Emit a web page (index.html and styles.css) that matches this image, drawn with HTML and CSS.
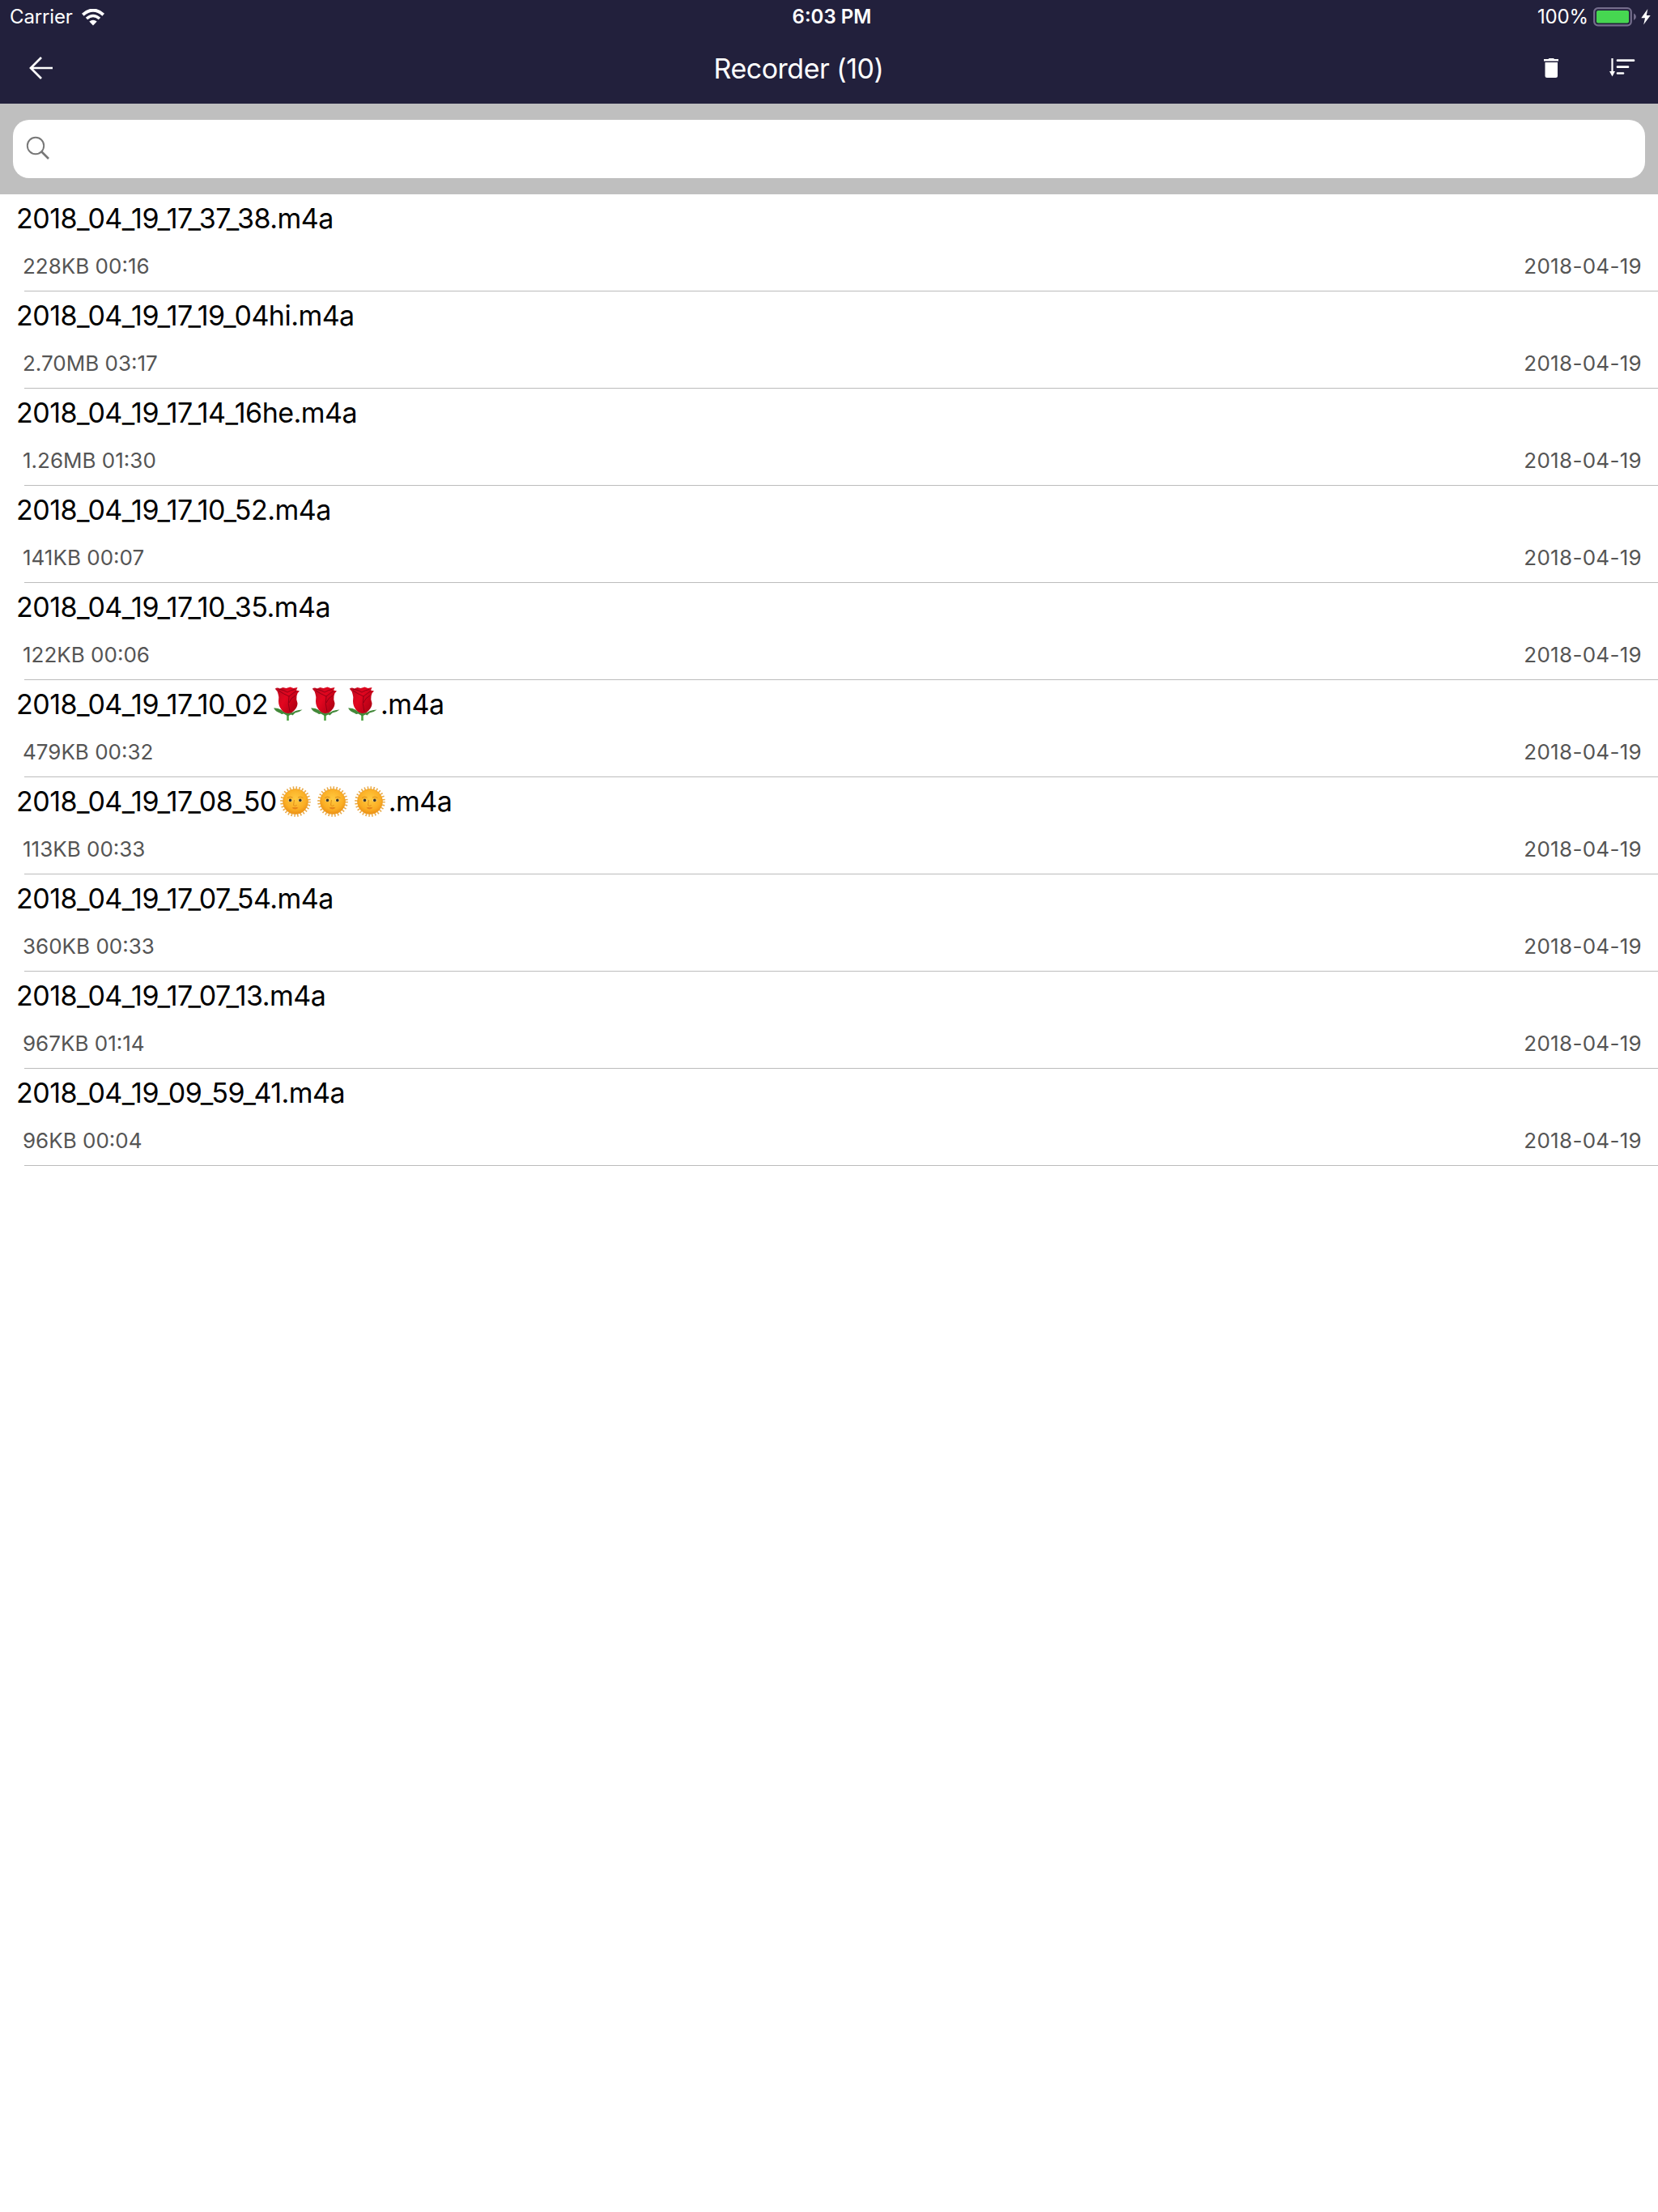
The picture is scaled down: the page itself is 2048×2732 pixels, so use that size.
FILE: index.html
```html
<!DOCTYPE html>
<html lang="en">
<head>
    <meta charset="UTF-8">
    <meta name="viewport" content="width=device-width, initial-scale=1.0">
    <title>Recorder</title>
    <link rel="stylesheet" href="styles.css">
</head>
<body>
    <!-- Shared emoji drawings -->
    <svg class="defs" width="0" height="0">
        <defs>
            <linearGradient id="petal" x1="0" y1="0" x2="1" y2="0.6">
                <stop offset="0" stop-color="#b80a20"/>
                <stop offset="0.5" stop-color="#e2061f"/>
                <stop offset="1" stop-color="#b00014"/>
            </linearGradient>
            <radialGradient id="sunFace" cx="0.5" cy="0.4" r="0.6">
                <stop offset="0" stop-color="#ffca40"/>
                <stop offset="0.7" stop-color="#fbae24"/>
                <stop offset="1" stop-color="#ec8f14"/>
            </radialGradient>
            <symbol id="rose" viewBox="0 0 40 44">
                <path d="M20.500 30V42" stroke="#4fa544" stroke-width="2.600"/>
                <path d="M3 26.500q5-.5 9 2q5 4 9 4q6 0 9-2.500q4-1.500 8.500-1.500q-4 3.500-9 4l-3 3-2-1-4 2-5-3q-3 1-4-.5q-6-2-8.500-6.500z" fill="#43893a"/>
                <path d="M4.500 3q3-2.500 6-.5l4-1.500 4 1 5-1.500 4 1.500 5-1-1.500 3.500 4 1q-3 2-3.500 6q-1 5 1 9q0 5-4 9q-3 3.500-7.500 3.500t-8-4q-4-5-4-11q1-5-.5-9q-1-4-3.500-6z" fill="url(#petal)"/>
                <path d="M9 5q6 4 13 7q5-4 9-6.500M22 12q-2 9 1 19M30 11q-6 3-8 9M9 3q7 1 11 4q5-3 9-3.500" fill="none" stroke="#930015" stroke-width="1"/>
            </symbol>
            <symbol id="sun" viewBox="0 0 40 40">
                <circle cx="20" cy="20" r="16.800" fill="none" stroke="#e9aa48" stroke-width="4" stroke-dasharray="1.500 2.270"/>
                <circle cx="20" cy="20" r="15.500" fill="url(#sunFace)" stroke="#eda02a" stroke-width="0.700"/>
                <path d="M10 15.500q3-2.500 6.500-.5M23 15q3-2 6.500.5M18.500 18l-1 6.500q2 1.800 4.200 0" fill="none" stroke="#dc8a18" stroke-width="0.900"/>
                <ellipse cx="13.500" cy="18.500" rx="2.700" ry="1.700" fill="#f5d897"/>
                <ellipse cx="25.800" cy="18.500" rx="2.700" ry="1.700" fill="#f5d897"/>
                <circle cx="13.500" cy="18.400" r="1.800" fill="#3c3528"/>
                <circle cx="25.800" cy="18.400" r="1.800" fill="#3c3528"/>
                <path d="M15.500 27.800q2-1.200 4-.5q2-.7 4 .5q-4 3.500-8 0z" fill="#e5831a"/>
            </symbol>
        </defs>
    </svg>

    <header class="header">
        <div class="status-bar">
            <div class="status-left">
                <span class="carrier">Carrier</span>
                <svg class="wifi" width="28" height="21" viewBox="0 0 28 21" fill="none" stroke="#fff">
                    <path d="M1.300 7.200Q14-4 26.700 7.200" stroke-width="4"/>
                    <path d="M6 12Q14 5 22 12" stroke-width="3.600"/>
                    <path d="M14 20.500L9.300 15.500Q14 12 18.700 15.500Z" fill="#fff" stroke="none"/>
                </svg>
            </div>
            <span class="clock">6:03 PM</span>
            <div class="status-right">
                <span class="percent">100%</span>
                <svg class="battery" width="54" height="24" viewBox="0 0 54 24">
                    <rect x="1.200" y="1.200" width="45.600" height="21.100" rx="4.500" fill="none" stroke="#746d8c" stroke-width="2.200"/>
                    <rect x="4" y="4" width="40" height="15.500" rx="2" fill="#46d651"/>
                    <path d="M50 7.500q3 1.500 3 4.200t-3 4.200z" fill="#746d8c"/>
                </svg>
                <svg class="bolt" width="12" height="20" viewBox="0 0 12 20">
                    <path d="M8.300 0L0.300 11.300H5L3.200 19.500L11.700 8H6.800Z" fill="#fff"/>
                </svg>
            </div>
        </div>
        <div class="nav-bar">
            <svg class="back" width="30" height="28" viewBox="0 0 30 28" fill="none" stroke="#fff" stroke-width="2.700">
                <path d="M29 14H2M15 1L2 14L15 27"/>
            </svg>
            <h1 class="title">Recorder (10)</h1>
            <div class="actions">
                <svg width="18" height="24" viewBox="0 0 18 24" fill="#fff">
                    <path d="M0 1H5.500L6.500 0H12L13 1H18V3.500H0Z"/>
                    <path d="M1.500 5H17V21.500Q17 24 14.500 24H4Q1.500 24 1.500 21.500Z"/>
                </svg>
                <svg width="32" height="23" viewBox="0 0 32 23" fill="none" stroke="#fff">
                    <path d="M3.500 0V18" stroke-width="2.200"/>
                    <path d="M0 16H7L3.500 22.500Z" fill="#fff" stroke="none"/>
                    <path d="M10 2.700H30M10 10.700H23M10 18.500H17" stroke-width="2.700" stroke-linecap="round"/>
                </svg>
            </div>
        </div>
    </header>

    <div class="search">
        <div class="search-box">
            <svg width="30" height="30" viewBox="0 0 30 30" fill="none" stroke="#777">
                <circle cx="12" cy="12" r="10.200" stroke-width="1.900"/>
                <path d="M19 19L28 28" stroke-width="2.600"/>
            </svg>
        </div>
    </div>

    <ul class="list">
        <li class="row">
            <div class="name">2018_04_19_17_37_38.m4a</div>
            <div class="meta"><span>228KB 00:16</span><span class="date">2018-04-19</span></div>
        </li>
        <li class="row">
            <div class="name">2018_04_19_17_19_04hi.m4a</div>
            <div class="meta"><span>2.70MB 03:17</span><span class="date">2018-04-19</span></div>
        </li>
        <li class="row">
            <div class="name">2018_04_19_17_14_16he.m4a</div>
            <div class="meta"><span>1.26MB 01:30</span><span class="date">2018-04-19</span></div>
        </li>
        <li class="row">
            <div class="name">2018_04_19_17_10_52.m4a</div>
            <div class="meta"><span>141KB 00:07</span><span class="date">2018-04-19</span></div>
        </li>
        <li class="row">
            <div class="name">2018_04_19_17_10_35.m4a</div>
            <div class="meta"><span>122KB 00:06</span><span class="date">2018-04-19</span></div>
        </li>
        <li class="row">
            <div class="name"><span>2018_04_19_17_10_02</span><span class="emoji rose"><svg><use href="#rose"/></svg><svg><use href="#rose"/></svg><svg><use href="#rose"/></svg></span><span>.m4a</span></div>
            <div class="meta"><span>479KB 00:32</span><span class="date">2018-04-19</span></div>
        </li>
        <li class="row">
            <div class="name"><span>2018_04_19_17_08_50</span><span class="emoji sun"><svg><use href="#sun"/></svg><svg><use href="#sun"/></svg><svg><use href="#sun"/></svg></span><span>.m4a</span></div>
            <div class="meta"><span>113KB 00:33</span><span class="date">2018-04-19</span></div>
        </li>
        <li class="row">
            <div class="name">2018_04_19_17_07_54.m4a</div>
            <div class="meta"><span>360KB 00:33</span><span class="date">2018-04-19</span></div>
        </li>
        <li class="row">
            <div class="name">2018_04_19_17_07_13.m4a</div>
            <div class="meta"><span>967KB 01:14</span><span class="date">2018-04-19</span></div>
        </li>
        <li class="row">
            <div class="name">2018_04_19_09_59_41.m4a</div>
            <div class="meta"><span>96KB 00:04</span><span class="date">2018-04-19</span></div>
        </li>
    </ul>
</body>
</html>
```
FILE: styles.css
```css
* {
    box-sizing: border-box;
}
body {
    margin: 0;
    background: #fff;
    color: #000;
    font-family: Inter, "Liberation Sans", sans-serif;
}
.defs {
    display: block;
}
.header {
    height: 128px;
    background: #22203c;
    color: #fff;
}
.status-bar {
    display: grid;
    grid-template-columns: 1fr auto 1fr;
    align-items: center;
    height: 41px;
    padding: 0 9px 0 12px;
    font-size: 24px;
    line-height: 42px;
}
.status-left,
.status-right {
    display: flex;
    align-items: center;
}
.status-left {
    gap: 11px;
}
.carrier,
.percent {
    letter-spacing: -0.15px;
}
.status-right {
    justify-content: flex-end;
}
.clock {
    margin-left: 4px;
    font-weight: 600;
}
.battery {
    margin: 0 5px 0 6px;
}
.nav-bar {
    display: flex;
    align-items: center;
    justify-content: space-between;
    height: 86px;
    padding: 0 28px 0 36px;
}
.title {
    margin: 0;
    font-size: 34px;
    font-weight: 400;
    letter-spacing: -0.5px;
}
.actions {
    display: flex;
    gap: 63px;
}
.search {
    height: 112px;
    padding: 20px 16px;
    background: #bfbfbf;
}
.search-box {
    display: flex;
    align-items: center;
    height: 72px;
    padding: 0 0 2px 16px;
    border-radius: 20px;
    background: #fff;
}
.list {
    margin: 0;
    padding: 0;
    list-style: none;
}
.row {
    height: 120px;
    padding: 7px 20px 0;
    background: linear-gradient(#bcbcbc, #bcbcbc) 30px 119px / 100% 1px no-repeat;
}
.name {
    display: flex;
    height: 46px;
    font-size: 34px;
    line-height: 46px;
    letter-spacing: -0.52px;
    white-space: nowrap;
}
.emoji {
    display: flex;
    align-items: center;
}
.emoji svg {
    width: 40px;
    height: 40px;
    margin: 0 3px;
}
.rose {
    margin-left: 1px;
}
.rose svg {
    height: 44px;
}
.meta {
    display: flex;
    justify-content: space-between;
    padding: 14px 0 0 8px;
    color: #555;
    font-size: 26px;
    line-height: 44px;
}
.date {
    letter-spacing: 0.3px;
}
```
